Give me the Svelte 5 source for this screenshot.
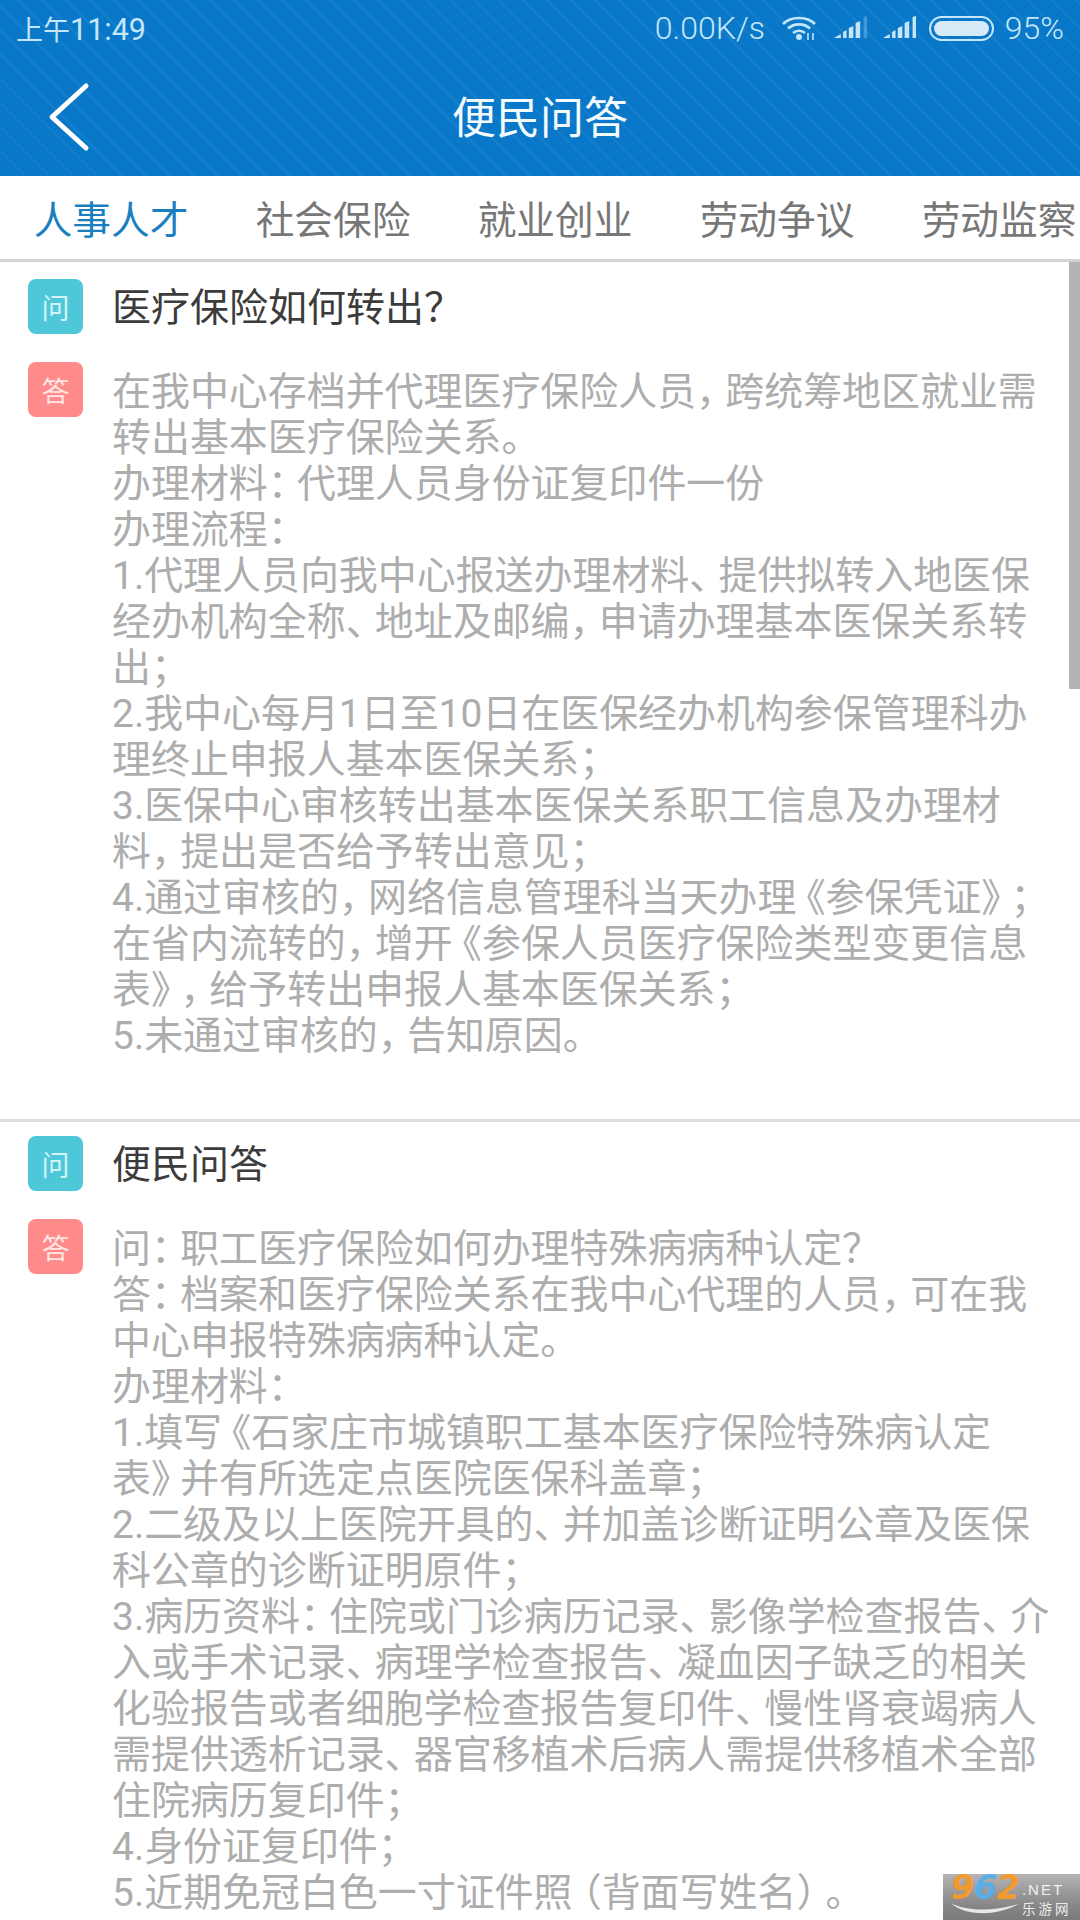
<script>
  const tabs = ['人事人才', '社会保险', '就业创业', '劳动争议', '劳动监察'];
  const items = [
    {
      q: '医疗保险如何转出？',
      a: [
        '在我中心存档并代理医疗保险人员，跨统筹地区就业需',
        '转出基本医疗保险关系。',
        '办理材料：代理人员身份证复印件一份',
        '办理流程：',
        '1.代理人员向我中心报送办理材料、提供拟转入地医保',
        '经办机构全称、地址及邮编，申请办理基本医保关系转',
        '出；',
        '2.我中心每月1日至10日在医保经办机构参保管理科办',
        '理终止申报人基本医保关系；',
        '3.医保中心审核转出基本医保关系职工信息及办理材',
        '料，提出是否给予转出意见；',
        '4.通过审核的，网络信息管理科当天办理《参保凭证》；',
        '在省内流转的，增开《参保人员医疗保险类型变更信息',
        '表》，给予转出申报人基本医保关系；',
        '5.未通过审核的，告知原因。'
      ]
    },
    {
      q: '便民问答',
      a: [
        '问：职工医疗保险如何办理特殊病病种认定？',
        '答：档案和医疗保险关系在我中心代理的人员，可在我',
        '中心申报特殊病病种认定。',
        '办理材料：',
        '1.填写《石家庄市城镇职工基本医疗保险特殊病认定',
        '表》并有所选定点医院医保科盖章；',
        '2.二级及以上医院开具的、并加盖诊断证明公章及医保',
        '科公章的诊断证明原件；',
        '3.病历资料：住院或门诊病历记录、影像学检查报告、介',
        '入或手术记录、病理学检查报告、凝血因子缺乏的相关',
        '化验报告或者细胞学检查报告复印件、慢性肾衰竭病人',
        '需提供透析记录、器官移植术后病人需提供移植术全部',
        '住院病历复印件；',
        '4.身份证复印件；',
        '5.近期免冠白色一寸证件照（背面写姓名）。'
      ]
    }
  ];
  // The reference's font sets CJK punctuation narrower than a full em.
  const parts = (l) => l.split(/([，。：；、《》（）])/).filter(Boolean);
  const kind = (s) => ('《（'.includes(s) ? 'open' : '，。：；、》）'.includes(s) ? 'close' : '');
</script>

<div class="page">
  <header class="head">
    <div class="status">
      <span class="time"><span class="cn">上午</span>11:49</span>
      <div class="sys">
        <span class="speed">0.00K/s</span>
        <svg class="wifi" width="36" height="26" viewBox="0 0 36 26" fill="none" stroke="currentColor" stroke-width="2.6">
          <path d="M1 9C9 1 25 1 33 9" />
          <path d="M6 13.5C12 8 22 8 28 13.5" />
          <path d="M11 18C14.500 15 19.500 15 23 18" />
          <circle cx="17" cy="22" r="3" fill="currentColor" stroke="none" />
          <path d="M26 18v7M31 18v7" stroke-width="1.6" />
        </svg>
        <svg class="sig s1" width="33" height="24" viewBox="0 0 29 24" fill="currentColor" preserveAspectRatio="none">
          <path d="M0 24l6-4v4zM8 18l3-2v8h-3zM13 14l4-2v12h-4zM19 9l4-2v17h-4z" />
          <path d="M26 3l3-1v22h-3z" opacity=".3" />
        </svg>
        <svg class="sig s2" width="33" height="24" viewBox="0 0 29 24" fill="currentColor" preserveAspectRatio="none">
          <path d="M0 24l6-4v4zM8 18l3-2v8h-3zM13 14l4-2v12h-4zM19 9l4-2v17h-4zM26 3l3-1v22h-3z" />
        </svg>
        <span class="bat"><span class="fill"></span></span>
        <span class="pct">95%</span>
      </div>
    </div>
    <div class="nav">
      <svg class="back" width="44" height="72" viewBox="0 0 44 72" fill="none" stroke="#fff" stroke-width="5" stroke-linecap="round" stroke-linejoin="round">
        <path d="M38 5L4 36l34 31" />
      </svg>
      <h1>便民问答</h1>
    </div>
  </header>

  <nav class="tabs">
    {#each tabs as t, i}
      <span class="tab" class:on={i === 0}>{t}</span>
    {/each}
  </nav>

  <main class="list">
    <div class="thumb"></div>
    {#each items as it}
      <section class="item">
        <div class="row q">
          <span class="mark blue">问</span>
          <p class="qt">{it.q}</p>
        </div>
        <div class="row a">
          <span class="mark red">答</span>
          <div class="at">
            {#each it.a as l}
              <div class="ln">{#each parts(l) as s}<span class={kind(s)}>{s}</span>{/each}</div>
            {/each}
          </div>
        </div>
      </section>
    {/each}
    <div class="wm">
      <div class="wm-top"><span class="num"><span class="o">9</span><span class="b">6</span><span class="o">2</span></span><span class="n">.NET</span></div>
      <div class="wm-bot">
        <svg width="68" height="13" viewBox="0 0 68 13"><path d="M0 1C14 9 40 10 68 2C44 15 14 14 0 1z" fill="#e8e8e8" /></svg>
        <span class="site">乐游网</span>
      </div>
    </div>
  </main>
</div>

<style>
  :global(body) { margin: 0; background: #fff; }
  .page {
    width: 1080px; height: 1920px; overflow: hidden; display: flex; flex-direction: column;
    font-family: "Noto Sans CJK SC", "Noto Sans", sans-serif;
    background: #fff;
  }
  .head {
    height: 176px; flex: none; color: #fff;
    background-color: #0a78c8;
    background-image: repeating-linear-gradient(45deg, rgba(255,255,255,.05) 0 2px, transparent 2px 17px);
  }
  .status {
    height: 56px; display: flex; align-items: center; justify-content: space-between;
    padding: 0 16px; font-family: Roboto, sans-serif; font-size: 32px; font-weight: 300; color: #c4e6f8;
  }
  .time { font-weight: 400; font-size: 30.5px; }
  .cn { font-family: "Noto Sans CJK SC", sans-serif; font-size: 27px; }
  .sys { display: flex; align-items: center; }
  .speed { margin-right: 17px; }
  .wifi { margin-right: 16px; }
  .sig.s1 { margin-right: 16px; margin-top: -4px; }
  .sig.s2 { margin-right: 13px; margin-top: -4px; }
  .bat {
    box-sizing: content-box; width: 55px; height: 15px; border: 2px solid #c4e6f8; border-radius: 13px; padding: 3px;
    display: flex; margin-right: 11px;
  }
  .fill { flex: 1; background: #d6e9f7; border-radius: 8px; }
  .nav { height: 120px; position: relative; display: flex; align-items: center; justify-content: center; }
  .back { position: absolute; left: 48px; top: 25px; }
  h1 { margin: -2px 0 0; font-size: 44px; font-weight: 400; color: #f4fbff; line-height: 1; }
  .tabs {
    height: 83px; flex: none; display: flex; overflow: hidden; border-bottom: 3px solid #d2d2d2;
    align-items: center; font-size: 38.7px; color: #777;
  }
  .tab { flex: 0 0 222px; text-align: center; white-space: nowrap; line-height: 1; }
  .tab.on { color: #1a7fbf; }
  .list { flex: 1; position: relative; overflow: hidden; }
  .thumb { position: absolute; right: 0; top: 0; width: 11px; height: 427px; background: #b4b4b4; }
  .item { padding: 14px 28px 0; height: 858px; box-sizing: border-box; }
  .item:first-of-type { padding-top: 17px; height: 860px; border-bottom: 3px solid #dcdcdc; }
  .row { display: flex; gap: 29px; }
  .a { margin-top: 28px; }
  .mark {
    flex: none; width: 55px; height: 55px; border-radius: 8px;
    display: flex; align-items: center; justify-content: center; font-size: 28px; line-height: 1;
  }
  .blue { background: #4ec8d8; color: #d4f3f7; }
  .red { background: #ff8a8a; color: #ffe6e6; }
  .qt { margin: -2px 0 0; font-size: 39px; line-height: 55px; color: #3c3c3c; }
  .at {
    font-family: Roboto, "Noto Sans CJK SC", sans-serif; font-size: 38.95px; line-height: 46px; color: #adadad;
    margin-top: 7px; text-spacing-trim: space-all;
  }
  .ln { white-space: nowrap; }
  .close { letter-spacing: -0.25em; }
  .open { font-feature-settings: "halt"; padding-left: 0.25em; }
  .wm {
    position: absolute; right: 0; bottom: 0; width: 137px; height: 46px;
    background: linear-gradient(#b4b4b4, #868686 70%, #7a7a7a);
  }
  .wm-top { display: flex; padding-left: 8px; height: 28px; }
  .num { font: italic bold 33px/28px "DejaVu Sans", sans-serif; }
  .o { color: #f39a2e; } .b { color: #58aee6; }
  .n { color: #f0f0f0; font: 15px/32px "Liberation Sans", sans-serif; letter-spacing: 2px; margin-left: 2px; }
  .wm-bot { display: flex; padding-left: 8px; height: 18px; align-items: flex-start; gap: 3px; }
  .site { font-family: Roboto, "Noto Sans CJK SC", sans-serif; color: #eee; font-size: 13.5px; line-height: 15px; letter-spacing: 3px; white-space: nowrap; }
</style>
